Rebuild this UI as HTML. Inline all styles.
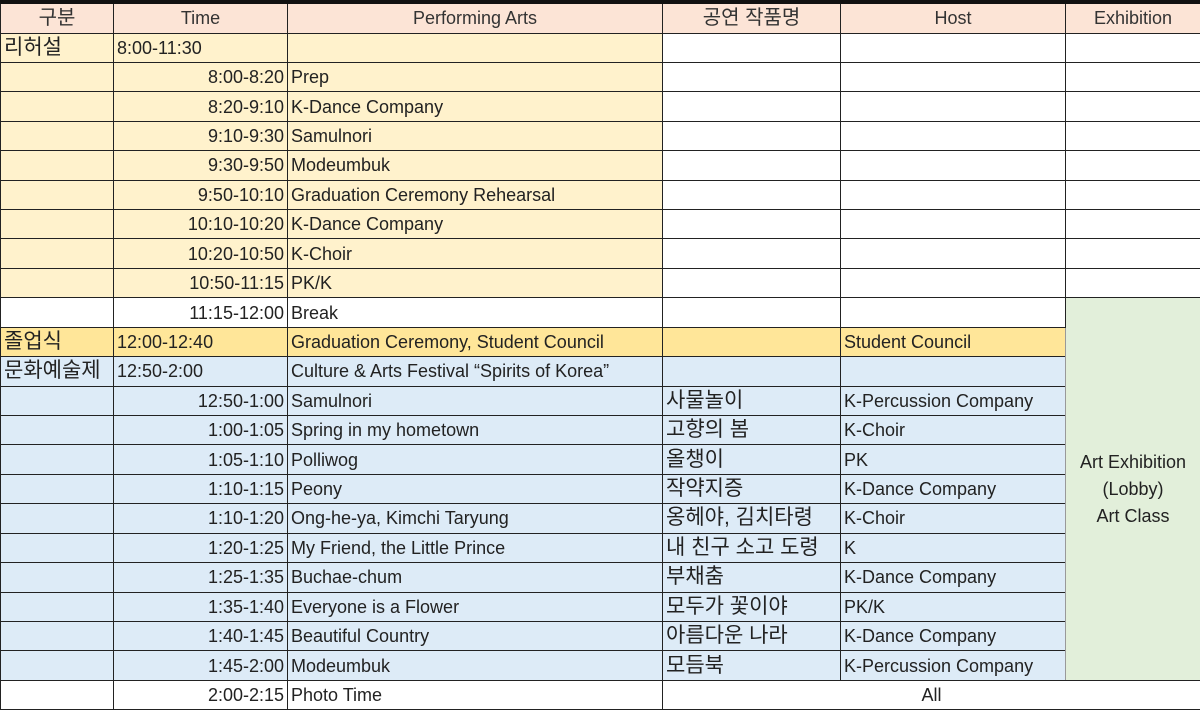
<!DOCTYPE html>
<html><head><meta charset="utf-8"><style>
body{margin:0;width:1200px;height:710px;overflow:hidden;background:#fff;font-family:"Liberation Sans","Noto Sans CJK KR",sans-serif;}
.bar{height:4px;background:#111;}
table{border-collapse:collapse;table-layout:fixed;width:1200px;}
tr{height:29.43px;}
td{border:1px solid #222;height:28.4px;padding:0 3px;font-size:18px;color:#222;white-space:nowrap;overflow:hidden;line-height:18px;}
th{border:1px solid #222;border-top:none;height:28px;font-weight:normal;font-size:18px;color:#333;background:#fce4d6;line-height:18px;padding:0;}
.k{font-size:21px;line-height:18px;}
.r{text-align:right;}
.y .a,.y .b,.y .c{background:#fff2cc;}
.g td{background:#ffe699;}
.bl td{background:#ddebf7;}
td.ex{background:#e2efda !important;text-align:center;line-height:27px;border-left:1px solid #999;}
</style></head><body>
<div class="bar"></div>
<table>
<colgroup><col style="width:113px"><col style="width:174px"><col style="width:375px"><col style="width:178px"><col style="width:225px"><col style="width:135px"></colgroup>
<tr style="height:29px"><th style="font-size:20px">구분</th><th>Time</th><th>Performing Arts</th><th style="font-size:20px">공연 작품명</th><th>Host</th><th>Exhibition</th></tr>
<tr class="y"><td class="a k">리허설</td><td class="b">8:00-11:30</td><td class="c"></td><td></td><td></td><td></td></tr>
<tr class="y"><td class="a"></td><td class="b r">8:00-8:20</td><td class="c">Prep</td><td></td><td></td><td></td></tr>
<tr class="y"><td class="a"></td><td class="b r">8:20-9:10</td><td class="c">K-Dance Company</td><td></td><td></td><td></td></tr>
<tr class="y"><td class="a"></td><td class="b r">9:10-9:30</td><td class="c">Samulnori</td><td></td><td></td><td></td></tr>
<tr class="y"><td class="a"></td><td class="b r">9:30-9:50</td><td class="c">Modeumbuk</td><td></td><td></td><td></td></tr>
<tr class="y"><td class="a"></td><td class="b r">9:50-10:10</td><td class="c">Graduation Ceremony Rehearsal</td><td></td><td></td><td></td></tr>
<tr class="y"><td class="a"></td><td class="b r">10:10-10:20</td><td class="c">K-Dance Company</td><td></td><td></td><td></td></tr>
<tr class="y"><td class="a"></td><td class="b r">10:20-10:50</td><td class="c">K-Choir</td><td></td><td></td><td></td></tr>
<tr class="y"><td class="a"></td><td class="b r">10:50-11:15</td><td class="c">PK/K</td><td></td><td></td><td></td></tr>
<tr><td></td><td class="r">11:15-12:00</td><td>Break</td><td></td><td></td><td class="ex" rowspan="13">Art Exhibition<br>(Lobby)<br>Art Class</td></tr>
<tr class="g"><td class="k">졸업식</td><td>12:00-12:40</td><td>Graduation Ceremony, Student Council</td><td></td><td>Student Council</td></tr>
<tr class="bl"><td class="k">문화예술제</td><td>12:50-2:00</td><td>Culture &amp; Arts Festival “Spirits of Korea”</td><td></td><td></td></tr>
<tr class="bl"><td></td><td class="r">12:50-1:00</td><td>Samulnori</td><td class="k">사물놀이</td><td>K-Percussion Company</td></tr>
<tr class="bl"><td></td><td class="r">1:00-1:05</td><td>Spring in my hometown</td><td class="k">고향의 봄</td><td>K-Choir</td></tr>
<tr class="bl"><td></td><td class="r">1:05-1:10</td><td>Polliwog</td><td class="k">올챙이</td><td>PK</td></tr>
<tr class="bl"><td></td><td class="r">1:10-1:15</td><td>Peony</td><td class="k">작약지증</td><td>K-Dance Company</td></tr>
<tr class="bl"><td></td><td class="r">1:10-1:20</td><td>Ong-he-ya, Kimchi Taryung</td><td class="k">옹헤야, 김치타령</td><td>K-Choir</td></tr>
<tr class="bl"><td></td><td class="r">1:20-1:25</td><td>My Friend, the Little Prince</td><td class="k">내 친구 소고 도령</td><td>K</td></tr>
<tr class="bl"><td></td><td class="r">1:25-1:35</td><td>Buchae-chum</td><td class="k">부채춤</td><td>K-Dance Company</td></tr>
<tr class="bl"><td></td><td class="r">1:35-1:40</td><td>Everyone is a Flower</td><td class="k">모두가 꽃이야</td><td>PK/K</td></tr>
<tr class="bl"><td></td><td class="r">1:40-1:45</td><td>Beautiful Country</td><td class="k">아름다운 나라</td><td>K-Dance Company</td></tr>
<tr class="bl"><td></td><td class="r">1:45-2:00</td><td>Modeumbuk</td><td class="k">모듬북</td><td>K-Percussion Company</td></tr>
<tr><td></td><td class="r">2:00-2:15</td><td>Photo Time</td><td colspan="3" style="text-align:center">All</td></tr>
</table>
</body></html>
